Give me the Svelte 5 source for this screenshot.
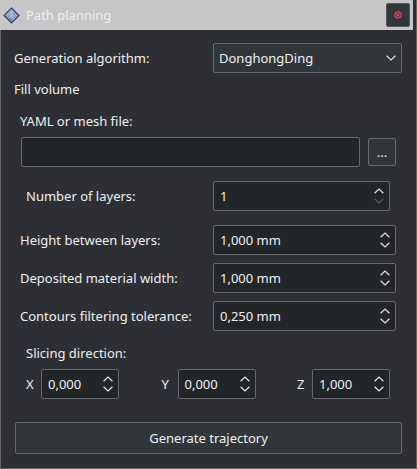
<script>
  const settings = [
    { label: 'Height between layers:', value: '1,000 mm' },
    { label: 'Deposited material width:', value: '1,000 mm' },
    { label: 'Contours filtering tolerance:', value: '0,250 mm' }
  ];
  const axes = [
    { name: 'X', value: '0,000' },
    { name: 'Y', value: '0,000' },
    { name: 'Z', value: '1,000' }
  ];
</script>

{#snippet spin(value, atMinimum)}
  <div class="field spin">
    <span>{value}</span>
    <svg width="10" height="16" viewBox="0 0 10 16">
      <path d="M.6 5.2 5 1 9.4 5.2" />
      <path class:disabled={atMinimum} d="M.6 10.8 5 15 9.4 10.8" />
    </svg>
  </div>
{/snippet}

<div class="window">
  <header>
    <div class="titlebar">
      <svg class="logo" width="17" height="17" viewBox="0 0 17 17">
        <path d="M8.5 1 16 8.5 8.5 16 1 8.5Z" fill="#7d8cb6" />
        <path d="M8.5 1.5 12 5 8 8.5 2 8.5Z" fill="#a3afcf" />
        <path d="M9 8 12 5 15.5 8.5 9 15Z" fill="#94a0c4" />
        <path d="M6 11 9 7.5 9 12" fill="none" stroke="#c3cbe0" />
        <path d="M8.5 1 16 8.5 8.5 16 1 8.5Z" fill="none" stroke="#35416c" stroke-width="1.1" />
      </svg>
      <h1>Path planning</h1>
      <button class="close" aria-label="Close">
        <svg width="8" height="8" viewBox="0 0 8 8">
          <circle cx="4" cy="4" r="3.2" />
          <path d="M2.6 2.6 5.4 5.4M5.4 2.6 2.6 5.4" />
        </svg>
      </button>
    </div>
  </header>
  <main>
    <div class="row algorithm">
      <span class="label">Generation algorithm:</span>
      <div class="field combo">
        <span>DonghongDing</span>
        <svg width="10" height="6" viewBox="0 0 10 6"><path d="M.6 .8 5 5 9.4 .8" /></svg>
      </div>
    </div>
    <div class="heading">Fill volume</div>
    <div class="file-label">YAML or mesh file:</div>
    <div class="row file">
      <div class="field path"></div>
      <button class="browse">...</button>
    </div>
    <div class="row layers">
      <span class="label">Number of layers:</span>
      {@render spin('1', true)}
    </div>
    <div class="settings">
      {#each settings as item}
        <div class="row">
          <span class="label">{item.label}</span>
          {@render spin(item.value, false)}
        </div>
      {/each}
    </div>
    <div class="slicing">Slicing direction:</div>
    <div class="row axes">
      {#each axes as axis}
        <div class="axis">
          <span>{axis.name}</span>
          {@render spin(axis.value, false)}
        </div>
      {/each}
    </div>
    <button class="generate">Generate trajectory</button>
  </main>
</div>

<style>
  :global(body) { background: #2d2f34; }
  .window {
    box-sizing: border-box;
    width: 417px;
    height: 469px;
    background: #2d2f34;
    color: #eff0f1;
    font: 13px/18px "Noto Sans", sans-serif;
    overflow: hidden;
  }
  header { height: 30px; padding-right: 3px; border-right: 1px solid #606468; }
  .titlebar {
    display: flex;
    align-items: center;
    box-sizing: border-box;
    height: 30px;
    padding: 0 3px 0 3px;
    background: #c6c6c6;
  }
  .logo { margin: 1px 6px 0 0; }
  h1 { flex: 1; margin: 0; font: inherit; color: #eff0f1; }
  button {
    box-sizing: border-box;
    padding: 0;
    border: 1px solid #65696c;
    border-radius: 2px;
    background: #31363b;
    color: inherit;
    font: inherit;
  }
  .close {
    display: flex;
    align-items: center;
    justify-content: center;
    width: 24px;
    height: 24px;
    border-color: #54585b;
  }
  svg { display: block; flex: none; }
  .close svg { fill: #4a363f; stroke: #da4453; stroke-width: 1.2; }
  main {
    box-sizing: border-box;
    height: 439px;
    padding: 13px 14px 0 13px;
    border: 1px solid #606468;
    border-top: 0;
  }
  .row { display: flex; align-items: center; }
  .field {
    display: flex;
    align-items: center;
    justify-content: space-between;
    box-sizing: border-box;
    height: 30px;
    padding: 0 5px 0 6px;
    border: 1px solid #65696c;
    border-radius: 2px;
    background: #232629;
  }
  .field svg { fill: none; stroke: #e4e5e6; stroke-width: 1.2; }
  .field .disabled { stroke: #56595c; }
  .label { flex: none; }
  .algorithm { justify-content: space-between; }
  .combo { width: 189px; background: #31363b; padding: 0 5px; }
  .heading { margin-top: 7px; }
  .file-label { margin: 14px 0 0 6px; }
  .file { margin: 7px 0 0 7px; gap: 8px; }
  .path { width: 339px; }
  .browse { width: 28px; height: 28px; }
  .layers { margin: 14px 12px 0 12px; justify-content: space-between; }
  .layers .field { width: 177px; }
  .settings {
    display: flex;
    flex-direction: column;
    gap: 8px;
    margin: 14px 6px 0 6px;
  }
  .settings .row { justify-content: space-between; }
  .settings .field { width: 183px; }
  .slicing { margin: 13px 0 0 12px; }
  .axes { justify-content: space-between; margin: 7px 12px 0 12px; }
  .axis { display: flex; align-items: center; }
  .axis span:first-child { flex: none; }
  .axis > span { width: 15px; }
  .axis:nth-child(2) > span { width: 16px; }
  .axis:nth-child(2) { margin-left: 1px; }
  .axis .field { width: 78px; }
  .generate { display: block; width: 387px; height: 32px; margin: 23px 0 0 1px; }
</style>
